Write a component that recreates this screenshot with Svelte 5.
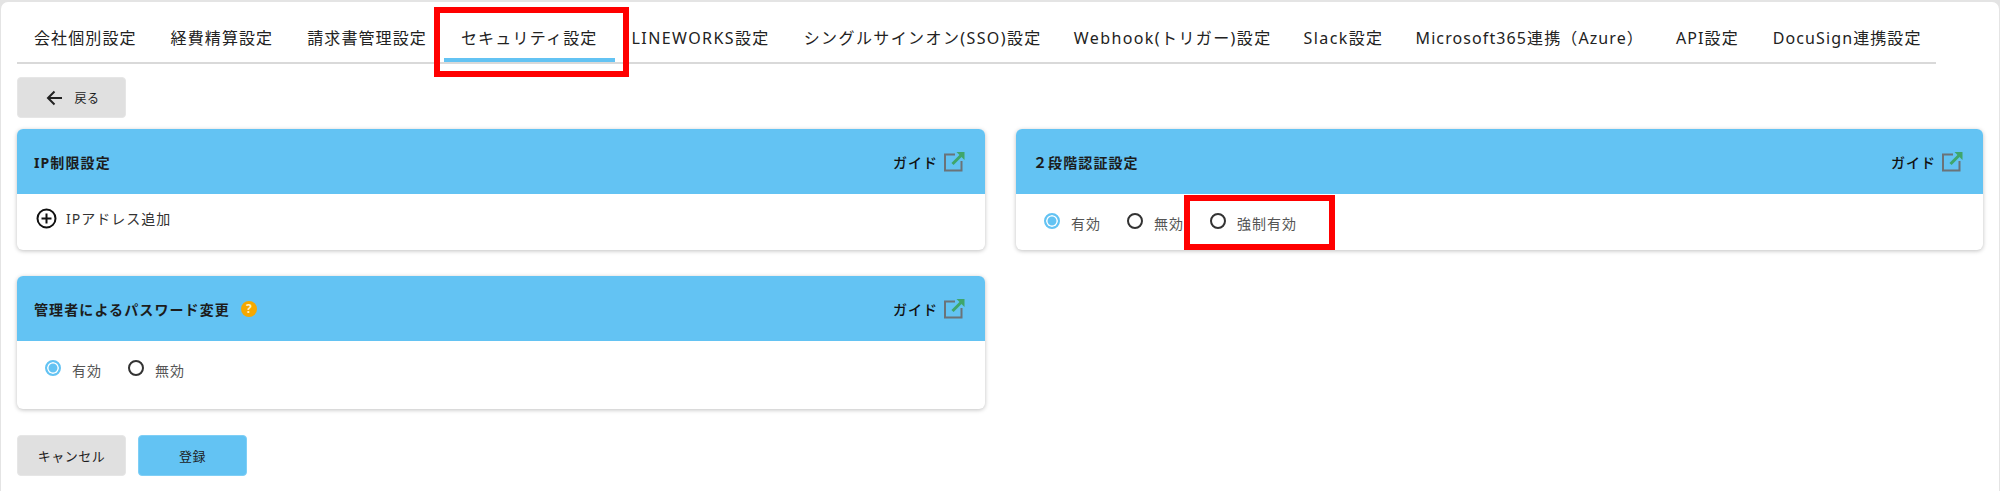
<script>
  const tabs = [
    { label: '会社個別設定' },
    { label: '経費精算設定' },
    { label: '請求書管理設定' },
    { label: 'セキュリティ設定', active: true },
    { label: 'LINEWORKS設定', wide: true },
    { label: 'シングルサインオン(SSO)設定', wide: true, tight: true },
    { label: 'Webhook(トリガー)設定', wide: true, tight: true },
    { label: 'Slack設定', wide: true, tight: true },
    { label: 'Microsoft365連携（Azure）', tight: true },
    { label: 'API設定' },
    { label: 'DocuSign連携設定' }
  ];
</script>

{#snippet guide()}
  <span class="guide">ガイド
    <svg width="22" height="21" viewBox="0 0 22 21" fill="none">
      <path d="M12 3.5H2V19.5H18.5V10" stroke="#6b7378" stroke-width="2"/>
      <path d="M9.5 13L18 4.5" stroke="#3fa66b" stroke-width="3"/>
      <path d="M13.5 1H21.5V9Z" fill="#3fa66b"/>
    </svg>
  </span>
{/snippet}

{#snippet radio(label, on)}
  <label class="radio">
    <span class="dot" class:on></span>
    <span class="rlabel">{label}</span>
  </label>
{/snippet}

<div class="page">
  <nav class="tabs">
    {#each tabs as t}
      <span class="tab" class:active={t.active} class:wide={t.wide} class:tight={t.tight}>{t.label}</span>
    {/each}
  </nav>

  <button class="btn back">
    <svg width="17" height="16" viewBox="0 0 17 16" fill="none" stroke="#222" stroke-width="2">
      <path d="M16 8H2M8.5 1.5L2 8L8.5 14.5"/>
    </svg>
    <span>戻る</span>
  </button>

  <div class="grid">
    <div class="col">
      <section class="card">
        <header><h2>IP制限設定</h2>{@render guide()}</header>
        <div class="body add">
          <svg width="21" height="21" viewBox="0 0 21 21" fill="none" stroke="#111" stroke-width="2">
            <circle cx="10.5" cy="10.5" r="9"/>
            <path d="M10.5 5.5V15.5M5.5 10.5H15.5"/>
          </svg>
          <span>IPアドレス追加</span>
        </div>
      </section>
      <section class="card">
        <header>
          <h2>管理者によるパスワード変更</h2>
          <span class="help">?</span>
          {@render guide()}
        </header>
        <div class="body radios tall">
          {@render radio('有効', true)}
          {@render radio('無効', false)}
        </div>
      </section>
    </div>
    <div class="col">
      <section class="card">
        <header><h2>２段階認証設定</h2>{@render guide()}</header>
        <div class="body radios">
          {@render radio('有効', true)}
          {@render radio('無効', false)}
          {@render radio('強制有効', false)}
        </div>
      </section>
    </div>
  </div>

  <div class="actions">
    <button class="btn">キャンセル</button>
    <button class="btn primary">登録</button>
  </div>

  <div class="mark mark-tab"></div>
  <div class="mark mark-radio"></div>
</div>

<style>
  :global(body) {
    margin: 0;
    background: #e4e4e4;
  }
  .page {
    position: relative;
    box-sizing: border-box;
    height: 489px;
    margin: 2px 1px 0 1px;
    padding: 0 15px 0 16px;
    background: #fff;
    border-radius: 7px 7px 0 0;
    font-family: "Noto Sans", "Noto Sans CJK JP", sans-serif;
    color: #222;
    overflow: hidden;
  }
  .tabs {
    display: flex;
    width: 1919px;
    height: 60px;
    border-bottom: 2px solid #d9d9d9;
    box-sizing: content-box;
  }
  .tab {
    box-sizing: border-box;
    height: 60px;
    padding: 24px 17px 0;
    font-size: 16px;
    line-height: 24px;
    letter-spacing: 1.1px;
    white-space: nowrap;
  }
  .tab.wide {
    letter-spacing: 1.4px;
  }
  .tab.tight {
    padding-right: 15px;
  }
  .tab.active {
    letter-spacing: 1.2px;
    border-bottom: 4px solid #63c3f3;
  }
  .btn {
    display: flex;
    align-items: center;
    justify-content: center;
    width: 109px;
    height: 41px;
    padding: 0;
    border: 1px solid #e6e6e6;
    border-radius: 4px;
    background: #e0e0e0;
    font: inherit;
    font-size: 13px;
    letter-spacing: 0.5px;
    color: #1c1c1c;
  }
  .btn.primary {
    background: #63c3f3;
    border-color: #7fcff6;
  }
  .back {
    margin-top: 13px;
    gap: 11px;
    padding-left: 3px;
    font-size: 12px;
  }
  .grid {
    display: grid;
    grid-template-columns: 968px 967px;
    gap: 31px;
    margin-top: 11px;
  }
  .col {
    display: flex;
    flex-direction: column;
    gap: 26px;
  }
  .card {
    border-radius: 6px;
    background: #fff;
    box-shadow: 0 1px 4px rgba(0, 0, 0, 0.25);
    overflow: hidden;
  }
  header {
    display: flex;
    align-items: center;
    height: 65px;
    padding: 0 20px 0 17px;
    background: #63c3f3;
  }
  h2 {
    margin: 0;
    font-size: 14px;
    font-weight: 700;
    letter-spacing: 1.1px;
    color: #1c1c1c;
  }
  .help {
    width: 16px;
    height: 16px;
    margin-left: 11px;
    border-radius: 50%;
    background: #f5a800;
    color: #fff3c4;
    font-size: 12px;
    font-weight: 700;
    line-height: 16px;
    text-align: center;
  }
  .guide {
    display: flex;
    align-items: center;
    gap: 5px;
    margin-left: auto;
    font-size: 14px;
    font-weight: 500;
    letter-spacing: 1px;
    color: #111;
  }
  .body {
    height: 56px;
    box-sizing: border-box;
  }
  .body.tall {
    height: 68px;
  }
  .add {
    display: flex;
    align-items: center;
    gap: 9px;
    padding: 0 0 8px 19px;
    font-size: 14px;
    letter-spacing: 1px;
    color: #333;
  }
  .radios {
    display: flex;
    align-items: flex-start;
    gap: 26px;
    padding: 17px 0 0 28px;
  }
  .radio {
    display: flex;
    align-items: center;
    gap: 11px;
    height: 20px;
    font-size: 14px;
    letter-spacing: 1px;
    color: #555;
  }
  .rlabel {
    position: relative;
    top: 2px;
  }
  .dot {
    box-sizing: border-box;
    width: 16px;
    height: 16px;
    border: 2.5px solid #333;
    border-radius: 50%;
    background: #fff;
  }
  .dot.on {
    border-color: #63c3f3;
    box-shadow: inset 0 0 0 1.5px #fff;
    background: #63c3f3;
  }
  .actions {
    display: flex;
    gap: 12px;
    margin-top: 26px;
  }
  .mark {
    position: absolute;
    box-sizing: border-box;
    border: 6px solid #f00;
    pointer-events: none;
  }
  .mark-tab {
    left: 433px;
    top: 5px;
    width: 195px;
    height: 70px;
  }
  .mark-radio {
    left: 1183px;
    top: 193px;
    width: 151px;
    height: 55px;
  }
</style>
